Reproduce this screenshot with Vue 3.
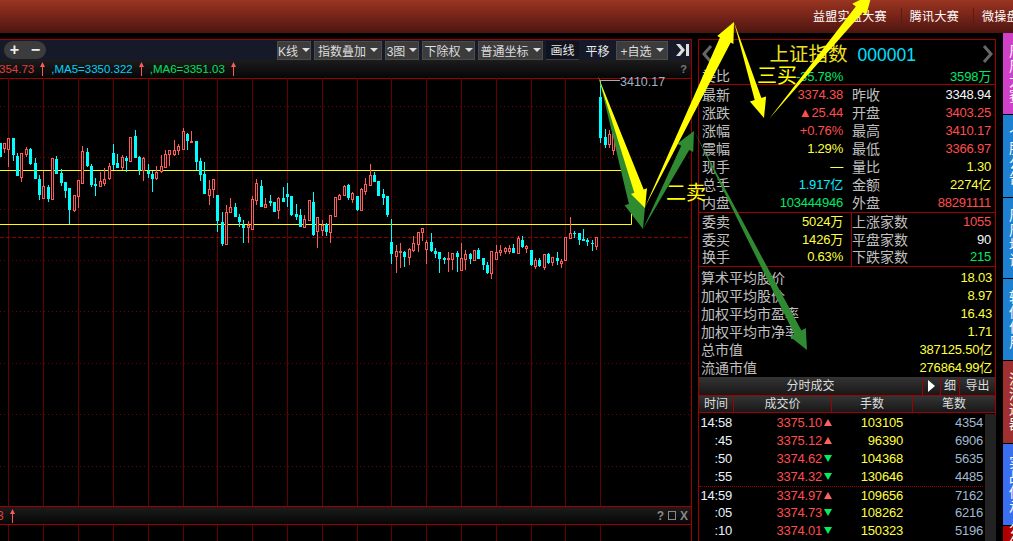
<template>
  <div class="page">
    <!-- top bar -->
    <div class="topbar">
      <a v-for="l in topLinks" :key="l" class="toplink">{{ l }}</a>
    </div>

    <div class="main">
      <!-- chart column -->
      <div class="left">
        <div class="toolbar">
          <div class="zoompill"><span>+</span><span>−</span></div>
          <div class="tools">
            <div
              v-for="b in toolButtons"
              :key="b.text"
              class="tool"
              :class="{ flat: b.flat, under: b.under }"
              :style="{ width: b.w + 'px' }"
            >
              {{ b.text }}<i v-if="!b.flat" class="caret"></i>
            </div>
            <svg class="collapse" width="14" height="14" viewBox="0 0 14 14">
              <path d="M0 1h4l5 6-5 6H0l5-6z" fill="#ddd" />
              <rect x="10" y="1" width="3" height="12" fill="#ddd" />
            </svg>
          </div>
        </div>

        <div class="infobar">
          <template v-for="m in maItems" :key="m.text">
            <span :style="{ color: m.color }">{{ m.text }}</span>
            <svg class="uparrow" width="7" height="14" viewBox="0 0 7 14">
              <path d="M3.5 0L6 5H4v9H3V5H1z" fill="#ff5a5a" />
            </svg>
          </template>
          <span class="help">?</span>
        </div>

        <svg class="chart" width="691" height="428" viewBox="0 78 691 428">
          <line
            v-for="x in gridX"
            :key="x"
            :x1="x + 0.5"
            :x2="x + 0.5"
            y1="78"
            y2="506"
            stroke="#640000"
          />
          <line
            v-for="y in gridY"
            :key="y"
            x1="0"
            x2="691"
            :y1="y + 0.5"
            :y2="y + 0.5"
            stroke="#7a0000"
            stroke-dasharray="1 3"
          />
          <line x1="0" x2="691" y1="237.5" y2="237.5" stroke="#8c0000" stroke-dasharray="4 2" />
          <line x1="0" x2="622" y1="170.5" y2="170.5" stroke="#ffff00" />
          <path d="M0 224.5H631.5V206" fill="none" stroke="#ffff00" />

          <g v-for="(c, i) in candles" :key="i">
            <line
              :x1="c.x + 0.5"
              :x2="c.x + 0.5"
              :y1="c.hi"
              :y2="c.lo"
              :stroke="c.up ? '#ff5a5a' : '#00ffff'"
            />
            <rect
              v-if="c.up"
              :x="c.x - 0.5"
              :y="c.top + 0.5"
              width="2"
              :height="Math.max(c.bot - c.top, 1)"
              fill="#000"
              stroke="#ff5a5a"
            />
            <rect v-else :x="c.x - 1" :y="c.top" width="3" :height="Math.max(c.bot - c.top, 1)" fill="#00ffff" />
          </g>

          <line x1="600" x2="620" y1="80.5" y2="80.5" stroke="#aaa" />
          <text x="620" y="85.5" class="peak">3410.17</text>
        </svg>

        <div class="lowerbar">
          <span class="clip3">3</span>
          <svg class="uparrow" width="7" height="14" viewBox="0 0 7 14">
            <path d="M3.5 0L6 5H4v9H3V5H1z" fill="#ff5a5a" />
          </svg>
          <div class="winbtns">
            <span>?</span>
            <i class="square"></i>
            <b>X</b>
          </div>
        </div>

        <svg class="chart lowergrid" width="691" height="17">
          <line v-for="x in gridX" :key="x" :x1="x + 0.5" :x2="x + 0.5" y1="0" y2="17" stroke="#640000" />
        </svg>
      </div>

      <!-- quote panel -->
      <div class="panel">
        <div class="title">
          <svg width="11" height="18" viewBox="0 0 11 18"><path d="M9 1L2 9l7 8" fill="none" stroke="#666" stroke-width="3" /></svg>
          <div class="name"><span>上证指数</span><em>000001</em></div>
          <svg width="11" height="18" viewBox="0 0 11 18"><path d="M2 1l7 8-7 8" fill="none" stroke="#666" stroke-width="3" /></svg>
        </div>

        <div class="quoterow ratio">
          <span class="lb">委比</span><span class="val" style="color: #00e868">-35.78%</span>
          <span class="lb"></span><span class="val" style="color: #00e868">3598万</span>
        </div>

        <div class="block first">
          <div v-for="r in quoteRows" :key="r[0]" class="quoterow">
            <span class="lb">{{ r[0] }}</span><span class="val" :style="{ color: r[2] }">{{ r[1] }}</span>
            <span class="lb">{{ r[3] }}</span><span class="val" :style="{ color: r[5] }">{{ r[4] }}</span>
          </div>
        </div>

        <div class="block divided">
          <div v-for="r in orderRows" :key="r[0]" class="quoterow">
            <span class="lb">{{ r[0] }}</span><span class="val" :style="{ color: r[2] }">{{ r[1] }}</span>
            <span class="lb">{{ r[3] }}</span><span class="val" :style="{ color: r[5] }">{{ r[4] }}</span>
          </div>
        </div>

        <div class="block stats">
          <div v-for="s in statRows" :key="s[0]" class="statrow">
            <span class="lb">{{ s[0] }}</span><span class="val">{{ s[1] }}</span>
          </div>
        </div>

        <div class="tradehead">
          <span class="cell wide">分时成交</span>
          <span class="cell play"><i></i></span>
          <span class="cell fine">细</span>
          <span class="cell export">导出</span>
        </div>
        <div class="tradecols">
          <span style="width: 34px">时间</span>
          <span style="width: 98px">成交价</span>
          <span style="width: 81px">手数</span>
          <span style="width: 83px">笔数</span>
        </div>
        <div class="trades">
          <div class="tradelist">
            <div v-for="(t, i) in trades" :key="i" class="trade" :class="{ breakline: i === 4 }">
              <span class="time">{{ t[0] }}</span>
              <span class="price">{{ t[1] }}</span>
              <i :class="t[2] ? 'tri-up' : 'tri-down'"></i>
              <span class="lots">{{ t[3] }}</span>
              <span class="count">{{ t[4] }}</span>
            </div>
          </div>
          <div class="scroll"></div>
        </div>
      </div>

      <!-- side tabs -->
      <div class="tabs">
        <div v-for="t in sideTabs" :key="t.text" class="tab" :style="{ background: t.color, height: t.h + 'px' }">
          <span v-for="ch in t.text" :key="ch">{{ ch }}</span>
        </div>
      </div>
    </div>

    <!-- hand drawn arrows on top of the screen -->
    <svg class="overlay" width="1013" height="541">
      <polygon v-for="(a, i) in greenArrows" :key="'g' + i" :points="arrowPoints(a)" fill="#2f8a32" />
      <polygon v-for="(a, i) in yellowArrows" :key="'y' + i" :points="arrowPoints(a)" fill="#ffff00" />
      <text x="757" y="83" class="mark">三买</text>
      <text x="666" y="200" class="mark">二卖</text>
    </svg>
  </div>
</template>

<script setup>
const topLinks = ['益盟实盘大赛', '腾讯大赛', '微操盘']

const toolButtons = [
  { text: 'K线', w: 34 },
  { text: '指数叠加', w: 68 },
  { text: '3图', w: 34 },
  { text: '下除权', w: 53 },
  { text: '普通坐标', w: 65 },
  { text: '画线', w: 33, flat: true, under: true },
  { text: '平移', w: 31, flat: true },
  { text: '+自选', w: 52 },
]

const maItems = [
  { text: '354.73', color: '#e04040' },
  { text: ',MA5=3350.322', color: '#00d0ff' },
  { text: ',MA6=3351.03', color: '#00e060' },
]

const gridX = [8, 43, 78, 113, 148, 183, 217, 252, 287, 322, 357, 391, 426, 461, 496, 531, 565, 600]
const gridY = [106, 157, 209, 260, 311, 363, 414, 466]

// candles read from the chart: [x, high, top, bottom, low, up]
const rawA = [
  [1, 68, 70, 110, 112, 0], [13, 70, 70, 84, 100, 1], [25, 55, 55, 86, 140, 1], [40, 55, 55, 105, 122, 0],
  [52, 100, 108, 167, 167, 0], [64, 100, 100, 170, 185, 1], [79, 82, 88, 102, 112, 1], [91, 84, 87, 132, 135, 0],
  [106, 114, 130, 177, 177, 0], [118, 166, 177, 225, 240, 0], [130, 153, 199, 233, 233, 1], [145, 195, 201, 237, 245, 0],
  [157, 115, 115, 236, 236, 1], [169, 108, 117, 162, 162, 0], [184, 148, 159, 189, 197, 0], [196, 186, 186, 212, 233, 0],
  [208, 204, 204, 270, 312, 0], [223, 226, 226, 270, 276, 1], [235, 180, 180, 227, 263, 1], [247, 78, 94, 188, 188, 1],
  [262, 84, 96, 138, 140, 0], [274, 132, 138, 195, 200, 0], [286, 174, 192, 198, 228, 0], [301, 155, 184, 197, 197, 1],
  [313, 144, 178, 188, 197, 1], [328, 130, 138, 174, 180, 1], [340, 72, 99, 135, 150, 0], [352, 102, 129, 144, 144, 0],
  [367, 105, 111, 141, 150, 1], [379, 108, 114, 123, 156, 0], [391, 52, 52, 122, 122, 1], [406, 30, 48, 114, 114, 0],
  [418, 108, 111, 150, 165, 0], [430, 111, 114, 150, 183, 1], [445, 132, 153, 162, 175, 0], [457, 153, 162, 177, 216, 0],
  [469, 138, 156, 174, 180, 1], [484, 105, 139, 153, 160, 1], [496, 90, 102, 141, 141, 1], [508, 90, 91, 102, 138, 1],
  [523, 60, 91, 102, 108, 1], [535, 72, 78, 90, 105, 1], [550, 24, 33, 87, 87, 1], [562, 39, 42, 63, 90, 0],
  [574, 33, 63, 66, 66, 1], [589, 63, 63, 126, 150, 0], [601, 114, 123, 165, 183, 0], [613, 126, 162, 222, 222, 0],
  [628, 180, 207, 225, 255, 1], [640, 178, 178, 208, 234, 1], [652, 225, 225, 303, 336, 0], [667, 276, 306, 372, 378, 0],
  [679, 255, 276, 372, 372, 1], [691, 234, 261, 276, 276, 1], [706, 250, 261, 291, 291, 0], [718, 282, 291, 306, 321, 0],
  [730, 300, 315, 324, 369, 0], [745, 303, 315, 321, 369, 1], [757, 228, 237, 327, 327, 1], [769, 178, 189, 240, 255, 1],
  [784, 180, 198, 261, 261, 0], [796, 234, 252, 261, 264, 1], [811, 225, 243, 249, 258, 0], [823, 246, 246, 276, 276, 0],
  [835, 232, 234, 270, 297, 1], [850, 201, 234, 246, 246, 0], [862, 189, 222, 231, 261, 0], [874, 228, 228, 285, 288, 0],
  [889, 252, 282, 291, 300, 0],
]
const rawB = [
  [1, 177, 195, 231, 231, 0], [13, 195, 207, 231, 231, 1], [28, 150, 150, 210, 210, 1], [40, 126, 156, 255, 258, 0],
  [52, 200, 201, 242, 294, 1], [67, 210, 225, 240, 258, 1], [79, 220, 222, 246, 258, 0], [91, 195, 195, 246, 279, 1],
  [106, 141, 141, 198, 198, 1], [118, 132, 135, 147, 150, 1], [133, 105, 108, 135, 135, 1], [145, 102, 105, 144, 150, 0],
  [157, 126, 129, 147, 159, 1], [172, 138, 138, 180, 183, 0], [184, 114, 117, 180, 183, 1], [196, 84, 102, 123, 135, 1],
  [211, 42, 75, 105, 105, 1], [223, 66, 75, 96, 96, 0], [235, 93, 93, 138, 138, 0], [250, 117, 132, 144, 165, 0],
  [262, 138, 138, 195, 200, 0], [274, 207, 276, 312, 342, 0], [289, 285, 303, 318, 369, 1], [301, 279, 303, 306, 354, 1],
  [313, 303, 306, 321, 351, 0], [328, 294, 297, 321, 345, 1], [340, 258, 279, 300, 306, 1], [355, 246, 246, 282, 306, 1],
  [367, 234, 234, 246, 273, 1], [379, 270, 276, 297, 342, 1], [394, 249, 276, 303, 306, 0], [406, 294, 303, 312, 324, 0],
  [418, 306, 306, 327, 369, 0], [433, 321, 324, 330, 342, 0], [445, 306, 324, 327, 366, 1], [457, 309, 309, 327, 360, 1],
  [472, 303, 309, 321, 366, 0], [484, 279, 324, 360, 360, 1], [496, 300, 312, 327, 360, 1], [511, 309, 312, 327, 342, 0],
  [523, 300, 300, 330, 330, 1], [535, 294, 300, 327, 327, 0], [550, 324, 324, 345, 360, 0], [562, 336, 345, 369, 372, 0],
  [574, 303, 303, 369, 387, 1], [589, 285, 306, 327, 327, 1], [601, 285, 300, 306, 318, 1], [616, 291, 294, 303, 312, 1],
  [628, 285, 294, 303, 312, 1], [640, 282, 294, 309, 309, 0], [655, 258, 264, 309, 312, 1], [667, 258, 270, 291, 294, 0],
  [679, 285, 288, 294, 309, 1], [694, 300, 300, 345, 348, 0], [706, 324, 330, 348, 357, 1], [718, 324, 330, 348, 351, 0],
  [733, 312, 312, 351, 360, 1], [745, 309, 312, 339, 342, 0], [757, 321, 321, 336, 348, 1], [772, 306, 324, 333, 345, 0],
  [784, 327, 333, 339, 354, 1], [796, 261, 261, 330, 330, 1], [811, 201, 249, 264, 264, 1], [823, 243, 249, 252, 264, 0],
  [838, 249, 249, 270, 285, 0], [850, 237, 267, 273, 273, 0], [862, 264, 270, 276, 288, 0], [877, 270, 279, 282, 303, 0],
  [889, 261, 261, 288, 300, 1],
]
const rawC = [
  [600, 80, 97, 138, 143, 0], [605, 129, 137, 145, 148, 0], [609, 130, 134, 144, 148, 1],
  [613, 127, 133, 150, 155, 1], [626, 168, 170, 186, 190, 0],
]

const toCandle = (baseX, baseY, scale) => ([x, hi, top, bot, lo, up]) => ({
  x: Math.floor(baseX + x / scale),
  hi: Math.round(baseY + hi / scale),
  top: Math.round(baseY + top / scale),
  bot: Math.round(baseY + bot / scale),
  lo: Math.round(baseY + lo / scale),
  up: !!up,
})

const candles = [
  ...rawA.map(toCandle(0, 120, 3)),
  ...rawB.map(toCandle(300, 150, 3)),
  ...rawC.map(toCandle(0, 0, 1)),
]

const RED = '#ff4d4d'
const YEL = '#ffff40'
const GRN = '#00e868'
const CYN = '#00f0ff'
const WHT = '#f4f8ff'

const quoteRows = [
  ['最新', '3374.38', RED, '昨收', '3348.94', WHT],
  ['涨跌', '▲25.44', RED, '开盘', '3403.25', RED],
  ['涨幅', '+0.76%', RED, '最高', '3410.17', RED],
  ['震幅', '1.29%', YEL, '最低', '3366.97', RED],
  ['现手', '—', YEL, '量比', '1.30', YEL],
  ['总手', '1.917亿', CYN, '金额', '2274亿', YEL],
  ['内盘', '103444946', GRN, '外盘', '88291111', RED],
]

const orderRows = [
  ['委卖', '5024万', YEL, '上涨家数', '1055', RED],
  ['委买', '1426万', YEL, '平盘家数', '90', WHT],
  ['换手', '0.63%', YEL, '下跌家数', '215', GRN],
]

const statRows = [
  ['算术平均股价', '18.03'],
  ['加权平均股价', '8.97'],
  ['加权平均市盈率', '16.43'],
  ['加权平均市净率', '1.71'],
  ['总市值', '387125.50亿'],
  ['流通市值', '276864.99亿'],
]

const trades = [
  ['14:58', '3375.10', 1, '103105', '4354'],
  [':45', '3375.12', 1, '96390', '6906'],
  [':50', '3374.62', 0, '104368', '5635'],
  [':55', '3374.32', 0, '130646', '4485'],
  ['14:59', '3374.97', 1, '109656', '7162'],
  [':05', '3374.73', 0, '108262', '6216'],
  [':10', '3374.01', 0, '150323', '5196'],
]

const sideTabs = [
  { text: '周周大赛', color: '#d040c8', h: 81 },
  { text: '个股公告', color: '#1e80d0', h: 82 },
  { text: '周周块说', color: '#1e80d0', h: 80 },
  { text: '转传作用', color: '#1e80d0', h: 81 },
  { text: '沪港通器', color: '#a03030', h: 82 },
  { text: '实战传承', color: '#3a70f0', h: 81 },
  { text: '公告', color: '#b00000', h: 20 },
]

const greenArrows = [
  { from: [599, 78], to: [643, 229], len: 28, head: 11, shaft: 6.5 },
  { from: [643, 229], to: [694, 131], len: 19, head: 9, shaft: 4.5 },
  { from: [694, 131], to: [807, 350], len: 20, head: 9, shaft: 4 },
]

const yellowArrows = [
  { from: [598, 76], to: [645, 208], len: 18, head: 8.5, shaft: 5 },
  { from: [645, 207], to: [734, 22], len: 20, head: 9, shaft: 6 },
  { from: [734, 22], to: [764, 118], len: 20, head: 8.5, shaft: 3.5 },
  { from: [769, 119], to: [872, -6], len: 20, head: 9, shaft: 4.5 },
]

function arrowPoints({ from, to, len, head, shaft }) {
  const dx = to[0] - from[0]
  const dy = to[1] - from[1]
  const d = Math.hypot(dx, dy)
  const ux = dx / d
  const uy = dy / d
  const bx = to[0] - ux * len
  const by = to[1] - uy * len
  const pts = [
    from,
    [bx - uy * shaft, by + ux * shaft],
    [bx - uy * head, by + ux * head],
    to,
    [bx + uy * head, by - ux * head],
    [bx + uy * shaft, by - ux * shaft],
  ]
  return pts.map((p) => p[0].toFixed(1) + ',' + p[1].toFixed(1)).join(' ')
}
</script>

<style>
html,
body {
  margin: 0;
  background: #000;
}
</style>

<style scoped>
.page {
  position: relative;
  width: 1013px;
  height: 541px;
  overflow: hidden;
  background: #000;
  font-family: "Liberation Sans", "Noto Sans CJK SC", sans-serif;
  font-size: 14px;
  color: #c8c8c8;
}

.topbar {
  display: flex;
  align-items: center;
  height: 33px;
  padding-left: 805px;
  box-sizing: border-box;
  background: linear-gradient(#9a3522, #7a2519 45%, #4c1610);
  white-space: nowrap;
  margin-bottom: 6px;
}

.toplink {
  flex: none;
  padding: 0 14px 0 8px;
  font-size: 12px;
  letter-spacing: 0.3px;
  color: #fff;
  border-right: 1px solid #5c1c14;
  line-height: 18px;
}

.main {
  display: flex;
  height: 502px;
}

.left {
  flex: none;
  width: 692px;
  box-sizing: border-box;
  border-right: 1px solid #a00000;
}

.toolbar {
  display: flex;
  align-items: center;
  height: 21px;
  box-sizing: border-box;
  border-top: 1px solid #a00000;
  background: #161a28;
}

.zoompill {
  display: flex;
  align-items: center;
  justify-content: space-around;
  width: 42px;
  height: 18px;
  margin-left: 4px;
  border-radius: 9px;
  background: #3c3c3c;
  color: #eee;
  font-size: 16px;
  font-weight: bold;
  line-height: 18px;
}

.tools {
  display: flex;
  align-items: center;
  margin-left: auto;
  gap: 3px;
}

.tool {
  display: flex;
  align-items: center;
  justify-content: center;
  gap: 4px;
  height: 19px;
  box-sizing: border-box;
  border: 1px solid #4c4c4c;
  background: #3c3c3c;
  color: #ddd;
  font-size: 12px;
  white-space: nowrap;
}

.tool.flat {
  border: none;
  background: none;
  color: #e8e8e8;
}

.tool.under {
  border-bottom: 1px solid #3a3f50;
  background: #11131c;
}

.caret {
  width: 0;
  height: 0;
  border-left: 4px solid transparent;
  border-right: 4px solid transparent;
  border-top: 4px solid #ddd;
}

.collapse {
  margin: 0 1px 0 5px;
}

.infobar {
  display: flex;
  align-items: center;
  gap: 5px;
  height: 18px;
  box-sizing: border-box;
  overflow: hidden;
  background: linear-gradient(#1c1c1c, #060606);
  font-size: 11.5px;
  white-space: nowrap;
}

.infobar > span:first-child {
  margin-left: -1px;
}

.uparrow {
  flex: none;
}

.help {
  margin-left: auto;
  margin-right: 4px;
  color: #777;
  font-weight: bold;
  font-size: 11px;
}

.chart {
  display: block;
  background: #000;
  overflow: visible;
  border-top: 0;
}

.chart:not(.lowergrid) {
  box-shadow: inset 0 1px 0 #a00000;
}

.peak {
  font-family: "Liberation Sans", sans-serif;
  font-size: 12.5px;
  fill: #9fb0c8;
}

.lowerbar {
  display: flex;
  align-items: center;
  gap: 5px;
  height: 19px;
  box-sizing: border-box;
  border-top: 1px solid #a00000;
  border-bottom: 1px solid #a00000;
  background: linear-gradient(#1c1c1c, #060606);
  overflow: hidden;
}

.clip3 {
  margin-left: -3px;
  color: #e04040;
  font-size: 12px;
}

.winbtns {
  display: flex;
  align-items: center;
  gap: 4px;
  margin-left: auto;
  margin-right: 3px;
  color: #888;
  font-size: 12px;
  font-weight: bold;
}

.square {
  width: 6px;
  height: 7px;
  border: 1px solid #888;
}

.panel {
  flex: none;
  width: 298px;
  margin-left: 6px;
  box-sizing: border-box;
  border: 1px solid #a00000;
  border-bottom: none;
}

.title {
  display: flex;
  align-items: center;
  justify-content: space-between;
  height: 28px;
  padding: 0 2px 0 3px;
}

.name {
  display: flex;
  align-items: baseline;
  gap: 10px;
  margin: -3px 66px 0 auto;
  color: #f0e020;
  font-size: 19.5px;
}

.name em {
  font-style: normal;
  color: #00e0ff;
  font-size: 17.5px;
}

.quoterow {
  display: grid;
  grid-template-columns: 47px 94px 56px 92px;
  height: 18px;
  line-height: 18px;
  padding-left: 3px;
}

.quoterow > .lb:nth-child(3) {
  padding-left: 9px;
}

.ratio {
  height: 17px;
  line-height: 17px;
  border-bottom: 1px solid #a00000;
  box-sizing: border-box;
}

.first {
  padding-top: 1px;
}

.lb {
  white-space: nowrap;
  color: #c0c0c0;
}

.val {
  text-align: right;
  font-size: 13px;
  white-space: nowrap;
  letter-spacing: -0.2px;
}

.divided {
  position: relative;
  border-top: 1px solid #a00000;
  border-bottom: 1px solid #a00000;
}

.divided::after {
  content: "";
  position: absolute;
  left: 152px;
  top: 0;
  bottom: 0;
  width: 1px;
  background: #a00000;
}

.divided .quoterow {
  height: 17.67px;
}

.stats {
  padding-top: 2px;
}

.statrow {
  display: flex;
  justify-content: space-between;
  height: 18px;
  line-height: 18px;
  padding: 0 3px 0 2px;
}

.statrow .val {
  color: #ffff40;
}

.tradehead {
  display: flex;
  height: 19px;
  line-height: 19px;
  background: linear-gradient(#343434, #181818);
  border-bottom: 1px solid #a00000;
  box-sizing: border-box;
  color: #ddd;
  font-size: 12px;
  text-align: center;
}

.cell {
  flex: none;
  border-left: 1px solid #a00000;
  box-sizing: border-box;
}

.cell.wide {
  width: 223px;
  border-left: none;
}

.cell.play {
  display: flex;
  align-items: center;
  justify-content: center;
  width: 18px;
}

.cell.play i {
  width: 0;
  height: 0;
  border-left: 7px solid #fff;
  border-top: 6px solid transparent;
  border-bottom: 6px solid transparent;
}

.cell.fine {
  width: 19px;
}

.cell.export {
  flex: 1;
}

.tradecols {
  display: flex;
  height: 17px;
  line-height: 17px;
  background: linear-gradient(#343434, #181818);
  border-bottom: 1px solid #a00000;
  box-sizing: border-box;
  font-size: 12px;
  text-align: center;
  color: #ddd;
}

.tradecols span {
  box-sizing: border-box;
  border-left: 1px solid #a00000;
}

.tradecols span:first-child {
  border-left: none;
}

.trades {
  display: flex;
  padding-top: 1px;
}

.tradelist {
  flex: 1;
  padding-right: 2px;
}

.scroll {
  flex: none;
  width: 11px;
  height: 130px;
  background: #222;
}

.trade {
  display: flex;
  align-items: center;
  height: 18px;
  font-size: 13px;
  letter-spacing: -0.2px;
}

.trade.breakline {
  border-top: 1px dotted #a00000;
  box-sizing: border-box;
}

.trade span {
  text-align: right;
  flex: none;
}

.time {
  width: 33px;
  color: #e8f4ff;
}

.price {
  width: 90px;
  color: #ff4d4d;
}

.tri-up,
.tri-down {
  flex: none;
  width: 0;
  height: 0;
  margin: 0 2px;
  border-left: 4px solid transparent;
  border-right: 4px solid transparent;
}

.tri-up {
  border-bottom: 7px solid #ff6060;
}

.tri-down {
  border-top: 7px solid #00f060;
}

.lots {
  width: 69px;
  color: #ffff40;
}

.count {
  width: 80px;
  color: #a0b8d0;
}

.tabs {
  flex: none;
  display: flex;
  flex-direction: column;
  gap: 1px;
  width: 10px;
  margin-left: 7px;
  margin-top: -6px;
  overflow: hidden;
}

.tab {
  flex: none;
  display: flex;
  flex-direction: column;
  justify-content: center;
  padding-left: 6px;
  color: #fff;
  font-size: 14px;
  line-height: 15px;
  white-space: nowrap;
}

.overlay {
  position: absolute;
  left: 0;
  top: 0;
  pointer-events: none;
}

.mark {
  font-family: "Noto Sans CJK SC", sans-serif;
  font-size: 20px;
  fill: #ffff00;
}
</style>
